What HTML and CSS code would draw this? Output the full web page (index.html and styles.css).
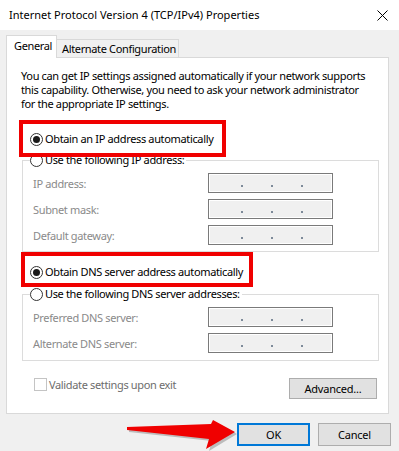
FILE: index.html
```html
<!DOCTYPE html>
<html lang="en">

<head>
    <meta charset="utf-8">
    <title>Internet Protocol Version 4 (TCP/IPv4) Properties</title>
    <meta name="viewport" content="width=device-width, initial-scale=1">
    <link rel="stylesheet" href="styles.css">
</head>

<body>
    <div class="titlebar">
        <span class="title">Internet Protocol Version 4 (TCP/IPv4) Properties</span>
        <svg class="close" width="11" height="11" viewBox="0 0 11 11">
            <path d="M0.5 0.5 L10.5 10.5 M10.5 0.5 L0.5 10.5" stroke="#000" stroke-width="1" fill="none"/>
        </svg>
    </div>

    <div class="dialog">
        <div class="tabs">
            <div class="tab active">General</div>
            <div class="tab">Alternate Configuration</div>
        </div>

        <div class="panel">
            <p class="intro">You can get IP settings assigned automatically if your network supports<br>this capability. Otherwise, you need to ask your network administrator<br>for the appropriate IP settings.</p>

            <div class="option first"><span class="radio on"></span>Obtain an IP address automatically</div>

            <fieldset class="group">
                <legend class="option"><span class="radio"></span>Use the following IP address:</legend>
                <div class="row"><span class="label">IP address:</span><div class="ip"><i></i><i></i><i></i></div></div>
                <div class="row"><span class="label">Subnet mask:</span><div class="ip"><i></i><i></i><i></i></div></div>
                <div class="row"><span class="label">Default gateway:</span><div class="ip"><i></i><i></i><i></i></div></div>
            </fieldset>

            <div class="option dns"><span class="radio on"></span>Obtain DNS server address automatically</div>

            <fieldset class="group">
                <legend class="option"><span class="radio"></span>Use the following DNS server addresses:</legend>
                <div class="row"><span class="label">Preferred DNS server:</span><div class="ip"><i></i><i></i><i></i></div></div>
                <div class="row"><span class="label">Alternate DNS server:</span><div class="ip"><i></i><i></i><i></i></div></div>
            </fieldset>

            <div class="bottom">
                <div class="check"><span class="box"></span>Validate settings upon exit</div>
                <button class="btn advanced">Advanced...</button>
            </div>
        </div>

        <div class="buttons">
            <button class="btn ok">OK</button>
            <button class="btn">Cancel</button>
        </div>
    </div>

    <!-- annotations drawn over the screenshot -->
    <div class="mark mark-ip"></div>
    <div class="mark mark-dns"></div>
    <svg class="arrow" width="399" height="451" viewBox="0 0 399 451">
        <polygon points="129,429 213,426 215,422 237,434 209,451 212,441 129,432" fill="#9a9a9a" opacity="0.6"/>
        <polygon points="127,427 211,424 213,420 235,432 206,449 209,439 127,430" fill="#f00000"/>
    </svg>
</body>

</html>
```

FILE: styles.css
```css
body {
    margin: 0;
    width: 399px;
    height: 451px;
    position: relative;
    overflow: hidden;
    background-color: #f0f0f0;
    font-family: "Noto Sans", "Open Sans", sans-serif;
    font-size: 11px;
    letter-spacing: -0.35px;
    color: #000;
}

.titlebar {
    height: 30px;
    background-color: #fff;
    display: flex;
    align-items: center;
    justify-content: space-between;
    padding: 0 11px 0 9px;
}

.title {
    line-height: 16px;
    letter-spacing: 0;
    white-space: nowrap;
}

.close {
    display: block;
}

.dialog {
    padding: 5px 0 0 6px;
}

.tabs {
    display: flex;
    align-items: flex-end;
    height: 22px;
}

.tab {
    box-sizing: border-box;
    height: 18px;
    width: 122px;
    border: 1px solid #d9d9d9;
    border-bottom: none;
    border-left: none;
    background-color: #f0f0f0;
    padding-left: 5px;
    line-height: 18px;
    white-space: nowrap;
}

.tab.active {
    position: relative;
    z-index: 1;
    height: 23px;
    width: 51px;
    margin-bottom: -1px;
    border-left: 1px solid #d9d9d9;
    background-color: #fff;
    padding-left: 7px;
    line-height: 20px;
}

.panel {
    box-sizing: border-box;
    width: 383px;
    height: 357px;
    border: 1px solid #d9d9d9;
    background-color: #fff;
    padding: 11px 0 0 0;
}

.intro {
    margin: 0 0 0 14px;
    line-height: 14px;
    white-space: nowrap;
}

.option {
    display: flex;
    align-items: center;
    height: 16px;
    line-height: 16px;
    white-space: nowrap;
}

.option.first {
    margin: 20px 0 0 23px;
}

.option.dns {
    margin: 12px 0 0 23px;
}

.radio {
    box-sizing: border-box;
    width: 13px;
    height: 13px;
    margin-right: 2px;
    border: 1px solid #333;
    border-radius: 50%;
    background-color: #fff;
    display: flex;
    align-items: center;
    justify-content: center;
}

.radio.on::after {
    content: "";
    width: 7px;
    height: 7px;
    border-radius: 50%;
    background-color: #1a1a1a;
}

.group {
    box-sizing: border-box;
    width: 357px;
    margin: 5px 0 0 15px;
    padding: 0 0 6px 0;
    border: 1px solid #dcdcdc;
}

.option.dns + .group {
    margin-top: 6px;
    padding-bottom: 7px;
}

.group legend {
    padding: 0 2px 0 0;
    margin-left: 7px;
}

.row {
    display: flex;
    align-items: center;
    height: 20px;
    margin-top: 6px;
    padding-left: 10px;
}

.group legend + .row {
    margin-top: 5px;
}

.label {
    width: 175px;
    color: #8a8a8a;
}

.ip {
    box-sizing: border-box;
    width: 125px;
    height: 20px;
    border: 1px solid #7a7a7a;
    background-color: #f0f0f0;
    box-shadow: inset 0 0 0 1px #fff;
    display: flex;
    align-items: flex-end;
    gap: 28px;
    padding: 0 0 5px 32px;
}

.ip i {
    width: 2px;
    height: 2px;
    background-color: #7d8a99;
}

.bottom {
    display: flex;
    justify-content: space-between;
    align-items: flex-start;
    margin: 17px 11px 0 27px;
}

.check {
    display: flex;
    align-items: center;
    height: 13px;
    color: #6d6d6d;
    white-space: nowrap;
}

.box {
    box-sizing: border-box;
    width: 13px;
    height: 13px;
    margin-right: 2px;
    border: 1px solid #c4c4c4;
    background-color: #fff;
}

.btn {
    box-sizing: border-box;
    width: 73px;
    height: 23px;
    border: 1px solid #adadad;
    background-color: #e1e1e1;
    font-family: inherit;
    font-size: 11px;
    letter-spacing: -0.2px;
    color: #000;
    padding: 0;
}

.btn.advanced {
    width: 88px;
    height: 21px;
}

.btn.ok {
    border: 2px solid #0078d7;
}

.buttons {
    display: flex;
    justify-content: flex-end;
    gap: 8px;
    margin: 9px 8px 0 0;
}

.mark {
    position: absolute;
    box-sizing: border-box;
    border: 4px solid #f00000;
}

.mark-ip {
    left: 19px;
    top: 120px;
    width: 207px;
    height: 37px;
}

.mark-dns {
    left: 21px;
    top: 252px;
    width: 232px;
    height: 35px;
}

.arrow {
    position: absolute;
    left: 0;
    top: 0;
}
```
